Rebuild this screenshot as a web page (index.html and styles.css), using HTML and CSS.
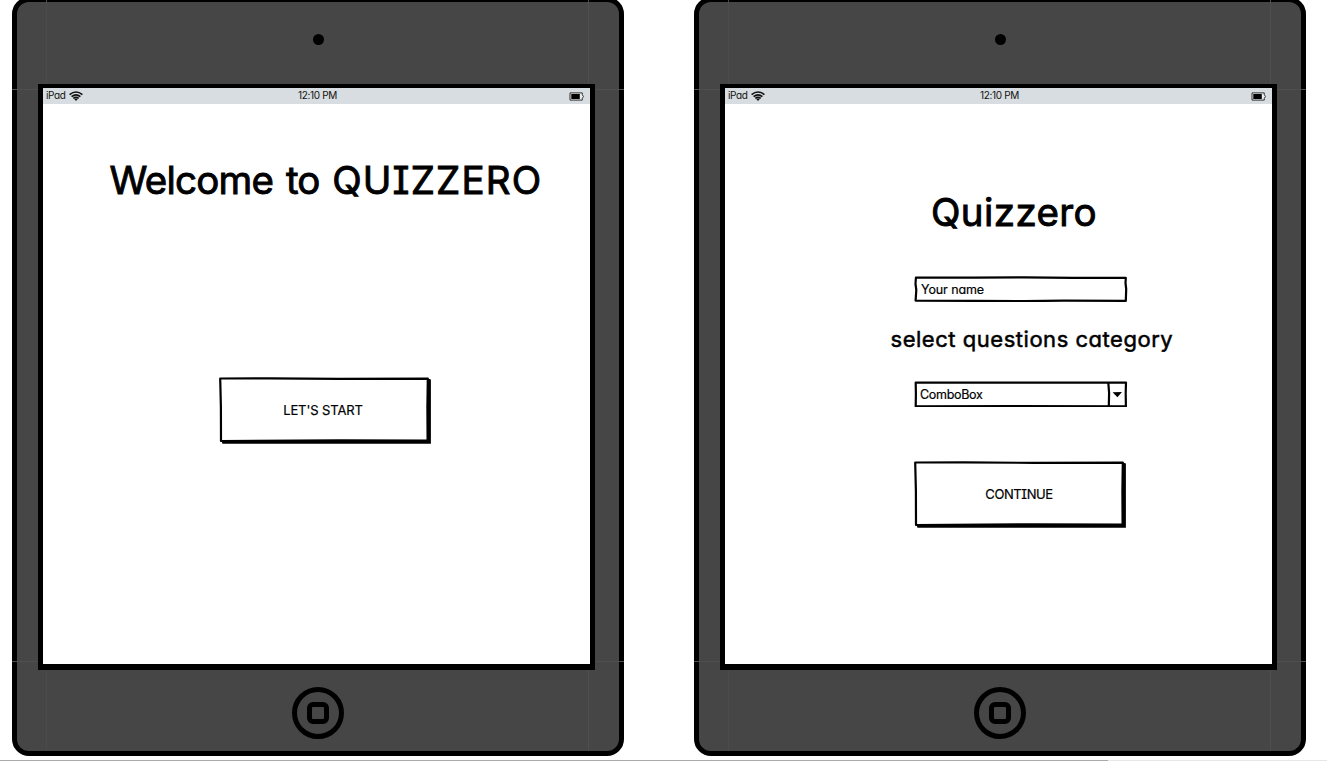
FILE: index.html
```
<!DOCTYPE html>
<html lang="en">
<head>
<meta charset="utf-8">
<title>Quizzero</title>
<link rel="stylesheet" href="styles.css">
</head>
<body>
<svg width="0" height="0" class="defs">
  <symbol id="wifi" viewBox="0 0 14 10">
    <path d="M.6 3.700Q7-1.700 13.400 3.700M2.600 5.700Q7 1.900 11.400 5.700M4.300 7.400Q7 5.300 9.700 7.400" fill="none" stroke="#111" stroke-width="1.600"/>
    <path d="M5.200 8.100Q7 6.900 8.800 8.100L7 9.900z" fill="#111"/>
  </symbol>
  <symbol id="battery" viewBox="0 0 16 9">
    <path d="M1 .9H13.300V2.700Q15.600 4.500 13.300 6.300V8.100H1z" fill="#e8edef" stroke="#333" stroke-width="1" stroke-linejoin="round"/>
    <path d="M2.300 2H10.800V7H2.300z" fill="#000"/>
  </symbol>
  <symbol id="sketch-button" viewBox="0 0 212 67">
    <path d="M2.500 64L3.500 66.800L211.900 66.800L211.900 2.500L209 1.500L208 63z" fill="#000"/>
    <path d="M1.200 1.500L50 1.300L120 1.900L208.800 1.700L208.400 30L208.600 63.600L120 63.300L2 64L1.900 30z" fill="#fff" stroke="#000" stroke-width="2.200" stroke-linejoin="round"/>
  </symbol>
</svg>
<main class="board">
  <section class="device">
    <div class="guides"></div>
    <div class="camera"></div>
    <div class="screen">
      <header class="status">
        <span class="carrier">iPad <svg class="wifi"><use href="#wifi"/></svg></span>
        <span class="clock">12:10 PM</span>
        <svg class="battery"><use href="#battery"/></svg>
      </header>
      <div class="content welcome">
        <h1 class="title"><span class="w1">Welcome</span> <span class="w2">to</span> <span class="w3">QUIZZERO</span></h1>
        <button class="button start"><svg class="shape"><use href="#sketch-button"/></svg><span class="label">LET'S START</span></button>
      </div>
    </div>
    <div class="home"><span class="home-square"></span></div>
  </section>
  <section class="device">
    <div class="guides"></div>
    <div class="camera"></div>
    <div class="screen">
      <header class="status">
        <span class="carrier">iPad <svg class="wifi"><use href="#wifi"/></svg></span>
        <span class="clock">12:10 PM</span>
        <svg class="battery"><use href="#battery"/></svg>
      </header>
      <div class="content setup">
        <h1 class="title brand">Quizzero</h1>
        <div class="field first">
          <svg class="shape" viewBox="0 0 214 26"><path d="M1.900 1.700L60 1.700L110 1.300L160 1.900L211.800 1.900L211.500 7L212.200 13L211.800 24.900L150 24.600L110 25.200L60 24.900L1.600 24.600L2.300 14L1.500 8z" fill="#fff" stroke="#000" stroke-width="2.200" stroke-linejoin="round"/></svg>
          <span class="label name">Your name</span>
        </div>
        <h2 class="subtitle">select questions category</h2>
        <div class="field">
          <svg class="shape" viewBox="0 0 214 26"><path d="M1.700 1.500L100 1.700L212 1.500L211.700 12L211.900 25.400L100 25.200L1.700 25.400L1.900 13zM194.300 1.600L195.100 12L194.800 25" fill="#fff" stroke="#000" stroke-width="2.200" stroke-linejoin="round"/><path d="M198.600 11.200L208 11L203.400 16.200z" fill="#000"/></svg>
          <span class="label combo">ComboBox</span>
        </div>
        <button class="button continue"><svg class="shape"><use href="#sketch-button"/></svg><span class="label">CONTINUE</span></button>
      </div>
    </div>
    <div class="home"><span class="home-square"></span></div>
  </section>
</main>
<footer class="scrollbar"><div class="thumb"></div></footer>
</body>
</html>
```
FILE: styles.css
```
* { box-sizing: border-box; }
body {
  margin: 0;
  width: 1327px;
  height: 761px;
  overflow: hidden;
  background: #fff;
  color: #000;
  font-family: Inter, "Open Sans", sans-serif;
  font-feature-settings: "cv11", "cv08";
  display: flex;
  flex-direction: column;
}
.defs { position: absolute; }
.board { display: flex; gap: 70px; padding-left: 12px; height: 760px; }
.device {
  position: relative;
  flex: none;
  width: 612px;
  height: 759px;
  margin-top: -3px;
  border: 5px solid #000;
  border-radius: 17px;
  background: #464646;
  display: flex;
  flex-direction: column;
  align-items: center;
}
.guides {
  position: absolute;
  inset: -2px -5px 0;
  background:
    linear-gradient(#4f4f4f, #4f4f4f) 0 89px / 100% 1px no-repeat,
    linear-gradient(#4f4f4f, #4f4f4f) 0 661px / 100% 1px no-repeat,
    linear-gradient(#4b4b4b, #4b4b4b) 34px 0 / 1px 100% no-repeat,
    linear-gradient(#4f4f4f, #4f4f4f) 576px 0 / 1px 100% no-repeat;
}
.camera { position: relative; flex: none; width: 11px; height: 11px; margin-top: 32px; border-radius: 50%; background: #000; }
.screen {
  position: relative;
  flex: none;
  width: 557px;
  height: 586px;
  margin: 39px 3px 0 0;
  border: 5px solid #000;
  border-width: 4px 5px 6px;
  background: #fff;
}
.status {
  display: grid;
  grid-template-columns: 1fr auto 1fr;
  align-items: center;
  height: 16px;
  padding: 0 5px 0 3px;
  background: #d7dde0;
  font-size: 10px;
  line-height: 12px;
  color: #111;
}
.carrier { display: flex; align-items: center; gap: 4px; letter-spacing: -.4px; padding-bottom: 2px; }
.wifi { width: 14px; height: 10px; margin-top: 2px; }
.battery { width: 16px; height: 9px; justify-self: end; }
.clock { letter-spacing: -.35px; padding: 0 0 2px 4px; }
.content { display: flex; flex-direction: column; }
.title {
  margin: 0;
  font-size: 38.5px;
  line-height: 48px;
  font-weight: 400;
  white-space: nowrap;
  -webkit-text-stroke: .9px #000;
  stroke-linejoin: round;
}
.w1 { letter-spacing: -.75px; }
.w2 { letter-spacing: -1px; margin: 0 2px 0 2px; }
.w3 { letter-spacing: 1.15px; }
.welcome { align-items: flex-start; padding: 52px 0 0 66.5px; }
.button, .field { position: relative; display: flex; align-items: center; }
.button {
  width: 212px;
  height: 67px;
  padding: 0 0 2px;
  border: 0;
  background: none;
  justify-content: center;
  color: #000;
  font: inherit;
  font-feature-settings: inherit;
}
.shape { position: absolute; left: 0; top: 0; width: 100%; height: 100%; }
.label { position: relative; font-size: 13px; white-space: nowrap; -webkit-text-stroke: .2px #000; }
.start { margin: 173px 0 0 109.5px; padding-right: 4px; }
.start .label { letter-spacing: -.1px; }
.setup { align-items: flex-start; padding: 84px 0 0 189px; }
.brand { margin-left: 17px; letter-spacing: .4px; }
.field { width: 214px; height: 26px; }
.first { margin-top: 40px; }
.name { padding-left: 7px; font-size: 12.5px; letter-spacing: -.1px; }
.combo { padding-left: 6px; font-size: 12.5px; letter-spacing: -.3px; }
.subtitle {
  margin: 21px 0 26px -23.5px;
  font-size: 22px;
  line-height: 32px;
  font-weight: 400;
  white-space: nowrap;
  letter-spacing: .53px;
  -webkit-text-stroke: .5px #000;
}
.continue { margin-top: 54px; padding-right: 2px; }
.continue .label { letter-spacing: -.4px; }
.home {
  flex: none;
  display: grid;
  place-items: center;
  width: 52px;
  height: 52px;
  margin-top: 17px;
  border: 5px solid #000;
  border-radius: 50%;
}
.home-square { width: 22px; height: 22px; margin-right: 1px; border: 5px solid #000; border-radius: 6px; }
.scrollbar { height: 1px; background: #e6e6e6; }
.thumb { width: 1108px; height: 1px; background: #a9a9a9; }
```
